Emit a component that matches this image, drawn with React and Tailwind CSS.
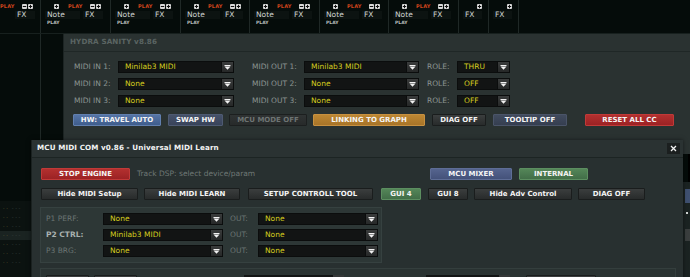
import React from "react";

const F = { fontFamily: '"DejaVu Sans", sans-serif' };

function Arrow() {
  return (
    <svg width="7" height="5" viewBox="0 0 7 5">
      <rect x="0.5" y="0" width="6" height="1" fill="#f2f2f2" />
      <polygon points="0.5,1.5 6.5,1.5 3.5,4.8" fill="#f2f2f2" />
    </svg>
  );
}

function Select({ w, value }) {
  return (
    <div className={`flex h-[12px] shrink-0 items-stretch bg-[#121414] border border-[#0b0d0d] ${w}`}>
      <div className="flex-1 pl-[6px] flex items-center text-[7.5px] leading-none text-[#d6ce1e] overflow-hidden whitespace-nowrap">{value}</div>
      <div className="w-[12px] flex items-center justify-center bg-gradient-to-b from-[#3a3c3c] to-[#262828] border-l border-[#0b0d0d]">
        <Arrow />
      </div>
    </div>
  );
}

function Btn({ w, children, c = "dark", dim }) {
  const styles = {
    dark: "from-[#3b3e3e] to-[#282b2b] border-[#1a1d1d]",
    blue: "from-[#5574a6] to-[#3f5d8c] border-[#617fae]",
    slate: "from-[#46526a] to-[#38435a] border-[#4e5a72]",
    slate2: "from-[#414b5e] to-[#353e50] border-[#4a5468]",
    gold: "from-[#bd8733] to-[#a87428] border-[#c79040]",
    red: "from-[#b3302f] to-[#9c2224] border-[#c03a38]",
    mixer: "from-[#55648e] to-[#44527a] border-[#5e6d96]",
    green: "from-[#548658] to-[#426e48] border-[#5c8e60]",
    off: "from-[#2f3333] to-[#272a2a] border-[#1c1f1f]",
  };
  return (
    <div className={`h-[12px] shrink-0 flex items-center justify-center bg-gradient-to-b border rounded-[1px] text-[7px] font-bold leading-none whitespace-nowrap ${styles[c]} ${dim ? "text-[#6e7473]" : "text-[#f4f4f4]"} ${w}`}>
      {children}
    </div>
  );
}

function Plus({ small }) {
  return (
    <div className="w-[5px] h-[5px] shrink-0 bg-[#d9d9d9] rounded-[1px] flex items-center justify-center">
      <svg width="5" height="5" viewBox="0 0 5 5">
        {!small && <rect x="2" y="0.8" width="1" height="3.4" fill="#111" />}
        <rect x="0.8" y="2" width="3.4" height="1" fill="#111" />
      </svg>
    </div>
  );
}

function TrackCol({ w, first }) {
  return (
    <div className={`shrink-0 h-full border-r border-[#1f2826] ${w}`}>
      <div className="flex items-center h-[8px] mt-[2px]">
        <div className="w-[13px] shrink-0" />
        {first ? <div className="w-[5px] shrink-0" /> : <Plus />}
        <div className="w-[9px] shrink-0" />
        <span className="w-[13px] shrink-0 text-[5px] font-bold text-[#d0441c] tracking-[0.2px] leading-none">PLAY</span>
        <div className="w-[9px] shrink-0" />
        <div className="flex gap-[1px]">
          <Plus small />
          <Plus />
        </div>
      </div>
      <div className="flex items-center mt-[1px] h-[8px]">
        <div className={`ml-[4px] w-[35px] h-[8px] text-[7.5px] leading-[8px] text-[#cfd3d2] pl-[2px] ${first ? "" : "bg-[#0c1311]"}`}>{first ? "" : "Note"}</div>
        <div className="ml-[3px] w-[20px] h-[8px] bg-[#0c1311] text-[7.5px] leading-[8px] text-[#cfd3d2] pl-[2px]">FX</div>
      </div>
      {!first && <div className="ml-[6px] mt-[2px] text-[4.5px] font-bold text-[#b8bcbb] leading-none">PLAY</div>}
    </div>
  );
}

function NarrowCol({ w }) {
  return (
    <div className={`shrink-0 h-full border-r border-[#1f2826] ${w}`}>
      <div className="flex justify-end h-[8px] mt-[2px] pr-[6px] items-center">
        <Plus />
      </div>
      <div className="ml-[4px] mt-[1px] w-[19px] h-[8px] bg-[#0c1311] text-[7.5px] leading-[8px] text-[#cfd3d2] pl-[2px]">FX</div>
    </div>
  );
}

export default function App() {
  return (
    <div style={F} className="relative w-[690px] h-[277px] overflow-hidden bg-[#050c0a]">
      {/* Track header strip */}
      <div className="flex h-[34px] border-b border-[#17201e] ml-[-27px]">
        <TrackCol w="w-[68px]" first />
        <TrackCol w="w-[70px]" />
        <TrackCol w="w-[70px]" />
        <TrackCol w="w-[69px]" />
        <TrackCol w="w-[70px]" />
        <TrackCol w="w-[69px]" />
        <TrackCol w="w-[70px]" />
        <NarrowCol w="w-[30px]" />
        <NarrowCol w="w-[30px]" />
        <div className="flex-1" />
      </div>
      {/* long vertical line */}
      <div className="absolute left-[40px] top-[34px] w-[1px] h-[166px] bg-[#1f2826]" />

      {/* tracker rows at left bottom */}
      <div className="absolute left-0 top-[201px] w-[40px] h-[76px] bg-[#0b1210] flex flex-col pt-[3px]">
        {[0, 1, 2, 3, 4, 5, 6].map((i) => (
          <div key={i} className={`h-[9px] flex items-center gap-[4px] pl-[3px] text-[5px] leading-none ${i === 3 ? "bg-[#1a2321]" : ""}`}>
            <span className="text-[#7c7a3a]">· ·</span>
            <span className="text-[#3a4442]">- - -</span>
          </div>
        ))}
      </div>

      {/* black strip right */}
      <div className="absolute left-[688px] top-[60px] w-[2px] h-[122px] bg-[#000]" />

      {/* HYDRA SANITY dialog */}
      <div className="absolute left-[63px] top-[34px] w-[640px] h-[120px] bg-[#2a3231] border-l border-[#1c2423]">
        <div className="h-[18px] border-b border-[#1f2726] flex items-center pl-[6px]">
          <span className="text-[7.2px] font-bold text-[#5b6563] tracking-[0.1px]">HYDRA SANITY v8.86</span>
        </div>
        <div className="pt-[9px] pl-[10px] flex flex-col gap-[5px]">
          {[
            ["MIDI IN 1:", "Minilab3 MIDI", "MIDI OUT 1:", "Minilab3 MIDI", "THRU"],
            ["MIDI IN 2:", "None", "MIDI OUT 2:", "None", "OFF"],
            ["MIDI IN 3:", "None", "MIDI OUT 3:", "None", "OFF"],
          ].map((r) => (
            <div key={r[0]} className="flex items-center h-[12px]">
              <span className="w-[44px] text-[7.5px] text-[#8c9593] whitespace-nowrap">{r[0]}</span>
              <Select w="w-[116px]" value={r[1]} />
              <span className="ml-[18px] w-[52px] text-[7.5px] text-[#8c9593] whitespace-nowrap">{r[2]}</span>
              <Select w="w-[115px]" value={r[3]} />
              <span className="ml-[8px] w-[30px] text-[7.5px] text-[#8c9593]">ROLE:</span>
              <Select w="w-[53px]" value={r[4]} />
            </div>
          ))}
          <div className="flex items-center mt-[2px] -ml-[1px]">
            <Btn w="w-[88px]" c="blue">HW: TRAVEL AUTO</Btn>
            <div className="w-[7px]" />
            <Btn w="w-[55px]" c="slate">SWAP HW</Btn>
            <div className="w-[6px]" />
            <Btn w="w-[78px]" c="off" dim>MCU MODE OFF</Btn>
            <div className="w-[6px]" />
            <Btn w="w-[112px]" c="gold">LINKING TO GRAPH</Btn>
            <div className="w-[7px]" />
            <Btn w="w-[54px]">DIAG OFF</Btn>
            <div className="w-[7px]" />
            <Btn w="w-[74px]" c="slate2">TOOLTIP OFF</Btn>
            <div className="w-[18px]" />
            <Btn w="w-[89px]" c="red">RESET ALL CC</Btn>
          </div>
        </div>
      </div>

      {/* right edge peek */}
      <div className="absolute left-[683px] top-[182px] w-[7px] h-[95px] bg-[#1b2322]">
        <div className="mt-[7px] ml-[2px] h-[14px] bg-[#3f5070]" />
        <div className="mt-[9px] ml-[3px] w-[2px] h-[2px] bg-[#cfd3d2]" />
        <div className="mt-[15px] ml-[2px] h-[12px] bg-[#3a3e3e]" />
      </div>

      {/* MCU MIDI COM dialog */}
      <div className="absolute left-[31px] top-[140px] w-[652px] h-[150px] bg-[#283030] border-l border-[#1a2120] shadow-[0_0_4px_rgba(0,0,0,0.5)]">
        <div className="h-[18px] border-b border-[#1c2423] flex items-center pl-[5px] pr-[3px] bg-[#2a3232]">
          <span className="text-[7.2px] font-bold text-[#f2f2f2] tracking-[0.1px]">MCU MIDI COM v0.86 - Universal MIDI Learn</span>
          <div className="ml-auto w-[13px] h-[11px] bg-[#1b1f1f] flex items-center justify-center">
            <svg width="7" height="7" viewBox="0 0 7 7">
              <path d="M1 1 L6 6 M6 1 L1 6" stroke="#f0f0f0" strokeWidth="1.3" />
            </svg>
          </div>
        </div>
        <div className="pl-[9px] pt-[10px]">
          <div className="flex items-center h-[12px]">
            <Btn w="w-[89px]" c="red">STOP ENGINE</Btn>
            <span className="ml-[7px] text-[7.5px] text-[#6f7876] whitespace-nowrap">Track DSP: select device/param</span>
            <div className="ml-auto mr-[95px] flex gap-[7px]">
              <Btn w="w-[82px]" c="mixer">MCU MIXER</Btn>
              <Btn w="w-[69px]" c="green">INTERNAL</Btn>
            </div>
          </div>
          <div className="flex items-center mt-[8px]">
            <Btn w="w-[97px]">Hide MIDI Setup</Btn>
            <div className="w-[6px]" />
            <Btn w="w-[96px]">Hide MIDI LEARN</Btn>
            <div className="w-[8px]" />
            <Btn w="w-[125px]">SETUP CONTROLL TOOL</Btn>
            <div className="w-[8px]" />
            <Btn w="w-[40px]" c="green">GUI 4</Btn>
            <div className="w-[7px]" />
            <Btn w="w-[40px]">GUI 8</Btn>
            <div className="w-[6px]" />
            <Btn w="w-[98px]">Hide Adv Control</Btn>
            <div className="w-[6px]" />
            <Btn w="w-[67px]">DIAG OFF</Btn>
          </div>
          <div className="mt-[7px] -ml-[1px] w-[342px] h-[56px] bg-[#2d3736] border border-[#364140] pt-[5px] pl-[5px] flex flex-col gap-[4px]">
            {[
              ["P1 PERF:", "None", false],
              ["P2 CTRL:", "Minilab3 MIDI", true],
              ["P3 BRG:", "None", false],
            ].map((r) => (
              <div key={r[0]} className="flex items-center h-[12px]">
                <span className={`w-[57px] text-[7.5px] whitespace-nowrap ${r[2] ? "font-bold text-[#a9b1af]" : "text-[#6b7573]"}`}>{r[0]}</span>
                <Select w="w-[120px]" value={r[1]} />
                <span className="ml-[7px] w-[28px] text-[7.5px] text-[#6b7573]">OUT:</span>
                <Select w="w-[120px]" value="None" />
              </div>
            ))}
          </div>
          <div className="mt-[5px] -ml-[1px] w-[636px] h-[20px] border-t border-l border-r border-[#343e3d] bg-[#2a3332] pt-[6px] pl-[5px] flex items-start">
            <Btn w="w-[43px]"></Btn>
            <div className="w-[5px]" />
            <Btn w="w-[43px]"></Btn>
            <div className="ml-[107px] flex">
              <div className="w-[89px] h-[12px] bg-[#121414]" />
              <div className="w-[11px] h-[12px] bg-[#343737]" />
            </div>
            <div className="ml-[82px] flex">
              <div className="w-[73px] h-[12px] bg-[#121414]" />
              <div className="w-[11px] h-[12px] bg-[#343737]" />
            </div>
            <div className="ml-[16px]">
              <Btn w="w-[70px]"></Btn>
            </div>
          </div>
        </div>
      </div>
    </div>
  );
}
